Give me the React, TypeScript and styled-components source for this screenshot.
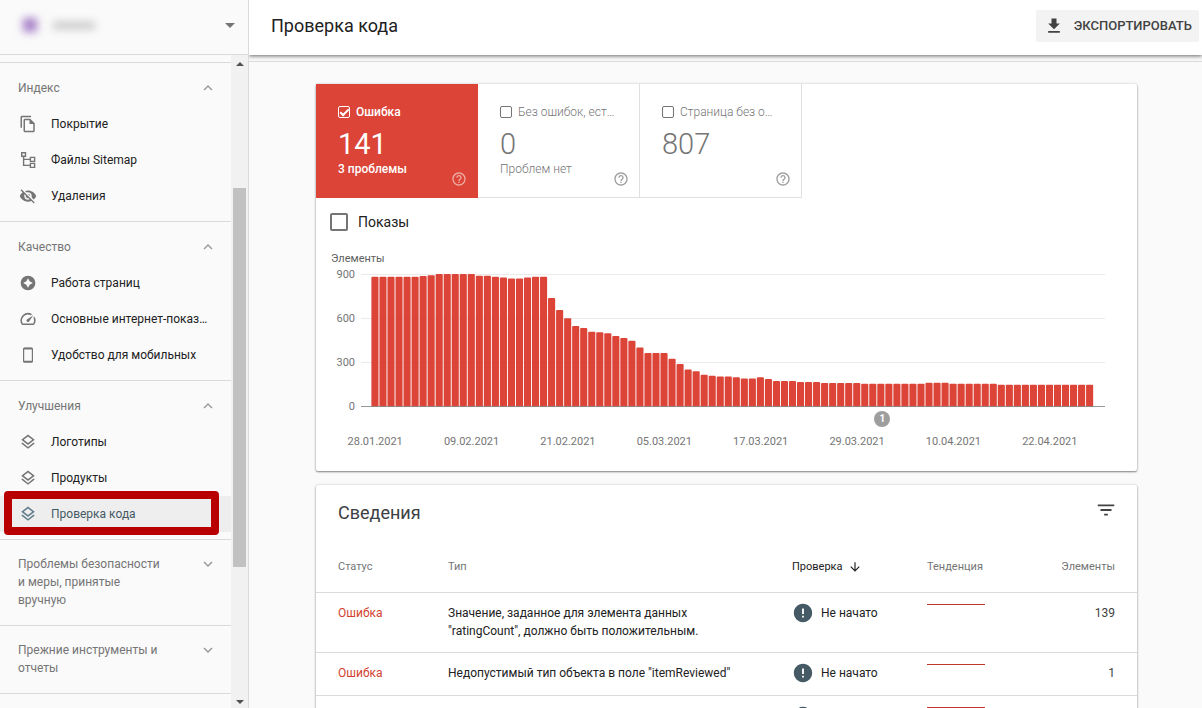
import React from "react";
import styled, { createGlobalStyle, css } from "styled-components";
import {
  MdArrowDownward,
  MdError,
  MdExpandLess,
  MdExpandMore,
  MdFileDownload,
  MdFilterList,
  MdHelpOutline,
  MdOutlineFileCopy,
  MdOutlineLayers,
  MdOutlineSpeed,
  MdVisibilityOff,
} from "react-icons/md";

const GlobalStyle = createGlobalStyle`
  *, *::before, *::after { box-sizing: border-box; }
  body {
    margin: 0;
    background: #fafafa;
    color: #212121;
    font: 400 12px/18px Roboto, "Noto Sans", sans-serif;
    overflow: hidden;
  }
  button, input { font: inherit; color: inherit; }
  svg { display: block; flex: none; }
`;

const Page = styled.div`
  display: flex;
  height: 100vh;
`;

/* Sidebar */

const Sidebar = styled.aside`
  display: flex;
  flex-direction: column;
  flex: none;
  width: 249px;
  border-right: 1px solid #dadada;
`;

const PropertyPicker = styled.button`
  display: flex;
  align-items: center;
  flex: none;
  gap: 20px;
  height: 55px;
  padding: 0 13px 4px 23px;
  border: 0;
  border-bottom: 1px solid #dadada;
  background: none;
`;

const BlurredLogo = styled.span`
  width: 14px;
  height: 14px;
  background: #a67fc8;
  filter: blur(4px);
`;

const BlurredName = styled.span`
  width: 42px;
  height: 7px;
  margin-left: -4px;
  background: #c4c4c4;
  filter: blur(4px);
`;

const PickerArrow = styled.span`
  margin-left: auto;
  border: 5px solid transparent;
  border-top-color: #757575;
  border-bottom: 0;
`;

const SidebarBody = styled.div`
  display: flex;
  flex: 1;
  min-height: 0;
`;

const Nav = styled.nav`
  flex: 1;
  min-width: 0;
  padding-top: 7px;
  overflow: hidden;
`;

const Group = styled.section`
  padding: 7px 0;
  border-top: 1px solid #dadada;
`;

const GroupToggle = styled.button<{ $collapsed?: boolean }>`
  display: flex;
  justify-content: space-between;
  align-items: center;
  width: 100%;
  height: 36px;
  padding: 0 14px 0 18px;
  border: 0;
  background: none;
  color: #757575;
  text-align: left;
  svg { color: #9a9a9a; }
  ${(p) =>
    p.$collapsed &&
    css`
      align-items: flex-start;
      height: auto;
      padding-top: 15px;
      padding-bottom: 16px;
      border-top: 1px solid #dadada;
    `}
`;

const GroupTitle = styled.span`
  max-width: 148px;
`;

const NavItem = styled.a<{ $active?: boolean }>`
  position: relative;
  display: flex;
  align-items: center;
  gap: 14px;
  height: 36px;
  padding: 0 19px;
  color: ${(p) => (p.$active ? "#455a64" : "#212121")};
  background: ${(p) => (p.$active ? "#eeeeee" : "none")};
  text-decoration: none;
  white-space: nowrap;
  svg { color: ${(p) => (p.$active ? "#607d8b" : "#757575")}; }
`;

const Highlight = styled.span`
  position: absolute;
  inset: -5px 12px -3px 4px;
  border: 8px solid #b80000;
  border-radius: 4px;
`;

const Scrollbar = styled.div`
  display: flex;
  flex-direction: column;
  align-items: center;
  justify-content: space-between;
  width: 17px;
  padding: 7px 0 4px;
  background: #f1f1f1;
`;

const ScrollArrow = styled.span<{ $down?: boolean }>`
  border: 4px solid transparent;
  ${(p) =>
    p.$down
      ? "border-top-color: #505050; border-bottom: 0;"
      : "border-bottom-color: #505050; border-top: 0;"}
`;

const ScrollTrack = styled.div`
  flex: 1;
  width: 13px;
  padding: 122px 0 0;
`;

const ScrollThumb = styled.div`
  height: 74%;
  background: #c1c1c1;
`;

/* Main column */

const Main = styled.main`
  display: flex;
  flex-direction: column;
  flex: 1;
  min-width: 0;
`;

const TopBar = styled.header`
  position: relative;
  display: flex;
  align-items: center;
  justify-content: space-between;
  flex: none;
  height: 55px;
  padding: 0 3px 4px 22px;
  background: #fff;
  box-shadow: 0 1px 4px rgba(0, 0, 0, 0.6);
  clip-path: inset(0 0 -8px 0);
`;

const PageTitle = styled.h1`
  margin: 0;
  font-size: 18px;
  line-height: 24px;
  font-weight: 400;
`;

const ExportButton = styled.button`
  display: flex;
  align-items: center;
  gap: 10px;
  height: 32px;
  padding: 0 7px 0 8px;
  border: 0;
  border-radius: 2px;
  background: #f3f3f3;
  color: #424242;
  font-size: 13px;
  font-weight: 500;
`;

const SubBar = styled.div`
  flex: none;
  height: 7px;
  border-bottom: 1px solid #dadada;
`;

const Content = styled.div`
  display: flex;
  flex-direction: column;
  gap: 14px;
  flex: 1;
  min-height: 0;
  padding: 22px 65px 0 67px;
  overflow: hidden;
`;

const Card = styled.section`
  flex: none;
  border-radius: 2px;
  background: #fff;
  box-shadow: 0 1px 2px rgba(0, 0, 0, 0.45), 0 0 3px rgba(0, 0, 0, 0.15);
`;

const Tiles = styled.div`
  display: flex;
`;

const Tile = styled.div<{ $active?: boolean }>`
  position: relative;
  width: 162px;
  height: 114px;
  padding: 19px 22px 0;
  border: solid #e0e0e0;
  border-width: 0 1px 1px 0;
  color: #757575;
  font-weight: 300;
  ${(p) =>
    p.$active &&
    css`
      border-color: #db4437;
      background: #db4437;
      color: #fff;
      font-weight: 500;
    `}
`;

const TileLabel = styled.label`
  display: flex;
  align-items: center;
  gap: 6px;
  white-space: nowrap;
`;

const Check = styled.input<{ $large?: boolean }>`
  appearance: none;
  display: grid;
  place-items: center;
  flex: none;
  width: ${(p) => (p.$large ? 18 : 12)}px;
  height: ${(p) => (p.$large ? 18 : 12)}px;
  margin: 0;
  border: ${(p) => (p.$large ? 2 : 1)}px solid ${(p) => (p.$large ? "#757575" : "currentColor")};
  border-radius: 2px;
  &:checked::before {
    content: "";
    width: 9px;
    height: 5px;
    margin-top: -2px;
    border: solid currentColor;
    border-width: 0 0 2px 2px;
    transform: rotate(-45deg);
  }
`;

const TileNumber = styled.div<{ $active?: boolean }>`
  font-size: 29px;
  line-height: 32px;
  margin-top: 7px;
  font-weight: ${(p) => (p.$active ? 400 : 300)};
`;

const TileHelp = styled.button<{ $active?: boolean }>`
  position: absolute;
  right: 10px;
  bottom: 10px;
  padding: 0;
  border: 0;
  background: none;
  color: ${(p) => (p.$active ? "rgba(255, 255, 255, 0.55)" : "#9e9e9e")};
`;

const ViewsToggle = styled.label`
  display: flex;
  align-items: center;
  gap: 10px;
  padding: 15px 14px 0;
  font-size: 14px;
`;

const AxisTitle = styled.div`
  margin-top: 20px;
  padding-left: 15px;
  color: #616161;
  font-size: 11px;
  line-height: 16px;
`;

const ChartRow = styled.div`
  display: flex;
  gap: 6px;
  height: 148px;
  padding-right: 32px;
`;

const YAxis = styled.div`
  display: flex;
  flex-direction: column;
  justify-content: space-between;
  width: 39px;
  color: #757575;
  font-size: 11px;
  line-height: 16px;
  text-align: right;
`;

const Plot = styled.div`
  position: relative;
  flex: 1;
  padding-top: 7px;
`;

const Marker = styled.span`
  position: absolute;
  left: 69%;
  bottom: -12px;
  width: 16px;
  height: 16px;
  border-radius: 50%;
  background: #9e9e9e;
  color: #fff;
  font-size: 10px;
  font-weight: 700;
  line-height: 16px;
  text-align: center;
`;

const XAxis = styled.div`
  display: grid;
  grid-template-columns: repeat(8, 1fr);
  padding: 19px 39px 21px 11px;
  color: #757575;
  font-size: 11px;
  line-height: 16px;
  text-align: center;
`;

const DetailsHeader = styled.div`
  display: flex;
  align-items: center;
  justify-content: space-between;
  height: 55px;
  padding: 0 20px 0 22px;
`;

const DetailsTitle = styled.h2`
  margin: 0;
  color: #3c4043;
  font-size: 18px;
  line-height: 24px;
  font-weight: 400;
`;

const IconButton = styled.button`
  padding: 0;
  border: 0;
  background: none;
  margin-bottom: 6px;
  color: #424242;
`;

const Table = styled.table`
  width: 100%;
  table-layout: fixed;
  border-spacing: 0;
`;

const Th = styled.th<{ $width?: number; $right?: boolean; $sorted?: boolean }>`
  width: ${(p) => (p.$width ? `${p.$width}px` : "auto")};
  height: 53px;
  padding: 2px 0 0;
  border-bottom: 1px solid #dadada;
  color: ${(p) => (p.$sorted ? "#212121" : "#757575")};
  font-size: 11px;
  font-weight: 400;
  text-align: ${(p) => (p.$right ? "right" : "left")};
  &:first-child { padding-left: 22px; }
  &:last-child { padding-right: 22px; }
`;

const Td = styled.td<{ $tone?: "error" | "muted" }>`
  height: 43px;
  padding: 11px 0 12px;
  border-bottom: 1px solid #dadada;
  color: ${(p) => (p.$tone === "error" ? "#d23f31" : p.$tone === "muted" ? "#424242" : "#212121")};
  vertical-align: top;
  &:first-child { padding-left: 22px; }
  &:nth-child(2) { padding-right: 44px; }
  &:last-child { padding-right: 22px; text-align: right; }
`;

const Inline = styled.span<{ $gap: number }>`
  display: flex;
  align-items: center;
  gap: ${(p) => p.$gap}px;
  height: 18px;
`;

const SitemapIcon = () => (
  <svg width="18" height="18" viewBox="0 0 18 18" fill="none" stroke="currentColor" strokeWidth="1.4">
    <path d="M2.7 1.7h3.8v3.6H2.7zM11.4 6.4h4.2v4h-4.2zM11.4 12.4h4.2v4h-4.2zM4.6 5.3v9.1h6.8M4.6 8.4h6.8" />
  </svg>
);

const ExperienceIcon = () => (
  <svg width="18" height="18" viewBox="0 0 24 24" fill="currentColor">
    <path
      fillRule="evenodd"
      d="M12 2.2a9.8 9.8 0 1 0 0 19.6 9.8 9.8 0 0 0 0-19.6zM12 5.6l2.2 4.2 4.2 2.2-4.2 2.2-2.2 4.2-2.2-4.2L5.6 12l4.2-2.2z"
    />
  </svg>
);

const PhoneIcon = () => (
  <svg width="18" height="18" viewBox="0 0 18 18" fill="none" stroke="currentColor">
    <rect x="4.6" y="2.2" width="8.8" height="13.8" rx="1" strokeWidth="1.2" />
    <path d="M4.6 2.6h8.8M4.6 15.6h8.8" strokeWidth="1.6" />
  </svg>
);

const layers = <MdOutlineLayers size={18} />;

const groups = [
  {
    title: "Индекс",
    items: [
      { label: "Покрытие", icon: <MdOutlineFileCopy size={18} /> },
      { label: "Файлы Sitemap", icon: <SitemapIcon /> },
      { label: "Удаления", icon: <MdVisibilityOff size={18} /> },
    ],
  },
  {
    title: "Качество",
    items: [
      { label: "Работа страниц", icon: <ExperienceIcon /> },
      { label: "Основные интернет-показ…", icon: <MdOutlineSpeed size={18} /> },
      { label: "Удобство для мобильных", icon: <PhoneIcon /> },
    ],
  },
  {
    title: "Улучшения",
    items: [
      { label: "Логотипы", icon: layers },
      { label: "Продукты", icon: layers },
      { label: "Проверка кода", icon: layers, active: true },
    ],
  },
];

const collapsedGroups = ["Проблемы безопасности и меры, принятые вручную", "Прежние инструменты и отчеты"];

const tiles = [
  { label: "Ошибка", value: "141", note: "3 проблемы", active: true },
  { label: "Без ошибок, ест…", value: "0", note: "Проблем нет" },
  { label: "Страница без о…", value: "807", note: "" },
];

/* Number of consecutive days followed by the item count on those days */
const runs: [number, number][] = [
  [6, 882], [1, 887], [1, 892], [5, 900], [2, 889], [1, 882], [1, 877], [2, 870], [1, 877], [2, 882],
  [1, 737], [1, 656], [1, 599], [1, 547], [1, 533], [1, 508], [1, 504], [1, 497], [1, 479], [1, 465],
  [1, 447], [1, 400], [3, 363], [1, 325], [1, 289], [1, 252], [1, 239], [1, 216], [1, 209], [2, 203],
  [1, 198], [2, 191], [1, 198], [1, 187], [3, 173], [3, 166], [5, 160], [8, 155], [3, 161], [6, 155],
  [12, 148],
];
const daily = runs.flatMap(([days, value]) => Array<number>(days).fill(value));

const dates = [
  "28.01.2021", "09.02.2021", "21.02.2021", "05.03.2021",
  "17.03.2021", "29.03.2021", "10.04.2021", "22.04.2021",
];

const issues = [
  {
    status: "Ошибка",
    type: 'Значение, заданное для элемента данных "ratingCount", должно быть положительным.',
    check: "Не начато",
    count: "139",
  },
  {
    status: "Ошибка",
    type: 'Недопустимый тип объекта в поле "itemReviewed"',
    check: "Не начато",
    count: "1",
  },
  { status: "", type: "", check: "", count: "" },
];

const BarChart = () => (
  <svg width="100%" height="133" viewBox="0 0 744 133" preserveAspectRatio="none" aria-hidden="true">
    {[0, 44, 88].map((y) => (
      <rect key={y} x="0" y={y} width="744" height="1" fill="#ebebeb" />
    ))}
    {daily.map((value, i) => {
      const x = 10.4 + i * 8.03;
      const top = 132.5 - value * 0.1472;
      return (
        <path
          key={i}
          fill="#db4437"
          d={`M${x} 132.5V${top + 1}q0-1 1-1h5.1q1 0 1 1V132.5z`}
        />
      );
    })}
    <rect x="0" y="132" width="744" height="1" fill="#757575" fillOpacity="0.75" />
  </svg>
);

const App = () => (
  <>
    <GlobalStyle />
    <Page>
      <Sidebar>
        <PropertyPicker aria-label="Выбор ресурса">
          <BlurredLogo />
          <BlurredName />
          <PickerArrow />
        </PropertyPicker>
        <SidebarBody>
          <Nav>
            {groups.map((group) => (
              <Group key={group.title}>
                <GroupToggle>
                  <GroupTitle>{group.title}</GroupTitle>
                  <MdExpandLess size={18} />
                </GroupToggle>
                {group.items.map((item) => (
                  <NavItem key={item.label} href="#" $active={"active" in item}>
                    {item.icon}
                    {item.label}
                    {"active" in item && <Highlight />}
                  </NavItem>
                ))}
              </Group>
            ))}
            {collapsedGroups.map((title) => (
              <GroupToggle key={title} $collapsed>
                <GroupTitle>{title}</GroupTitle>
                <MdExpandMore size={18} />
              </GroupToggle>
            ))}
            <Group />
          </Nav>
          <Scrollbar>
            <ScrollArrow />
            <ScrollTrack>
              <ScrollThumb />
            </ScrollTrack>
            <ScrollArrow $down />
          </Scrollbar>
        </SidebarBody>
      </Sidebar>
      <Main>
        <TopBar>
          <PageTitle>Проверка кода</PageTitle>
          <ExportButton>
            <MdFileDownload size={20} />
            ЭКСПОРТИРОВАТЬ
          </ExportButton>
        </TopBar>
        <SubBar />
        <Content>
          <Card>
            <Tiles>
              {tiles.map((tile) => (
                <Tile key={tile.label} $active={tile.active}>
                  <TileLabel>
                    <Check type="checkbox" defaultChecked={tile.active} />
                    {tile.label}
                  </TileLabel>
                  <TileNumber $active={tile.active}>{tile.value}</TileNumber>
                  {tile.note}
                  <TileHelp $active={tile.active} aria-label="Справка">
                    <MdHelpOutline size={16} />
                  </TileHelp>
                </Tile>
              ))}
            </Tiles>
            <ViewsToggle>
              <Check type="checkbox" $large />
              Показы
            </ViewsToggle>
            <AxisTitle>Элементы</AxisTitle>
            <ChartRow>
              <YAxis>
                <span>900</span>
                <span>600</span>
                <span>300</span>
                <span>0</span>
              </YAxis>
              <Plot>
                <BarChart />
                <Marker>1</Marker>
              </Plot>
            </ChartRow>
            <XAxis>
              {dates.map((date) => (
                <span key={date}>{date}</span>
              ))}
            </XAxis>
          </Card>
          <Card>
            <DetailsHeader>
              <DetailsTitle>Сведения</DetailsTitle>
              <IconButton aria-label="Фильтр">
                <MdFilterList size={22} />
              </IconButton>
            </DetailsHeader>
            <Table>
              <thead>
                <tr>
                  <Th $width={132}>Статус</Th>
                  <Th>Тип</Th>
                  <Th $width={135} $sorted>
                    <Inline $gap={5}>
                      Проверка <MdArrowDownward size={14} />
                    </Inline>
                  </Th>
                  <Th $width={90}>Тенденция</Th>
                  <Th $width={120} $right>Элементы</Th>
                </tr>
              </thead>
              <tbody>
                {issues.map((issue) => (
                  <tr key={issue.type}>
                    <Td $tone="error">{issue.status}</Td>
                    <Td>{issue.type}</Td>
                    <Td>
                      <Inline $gap={7}>
                        <MdError size={22} color="#455a64" />
                        {issue.check}
                      </Inline>
                    </Td>
                    <Td>
                      <svg width="58" height="18" viewBox="0 0 58 18">
                        <rect width="58" height="1" fill="#c5372c" />
                      </svg>
                    </Td>
                    <Td $tone="muted">{issue.count}</Td>
                  </tr>
                ))}
              </tbody>
            </Table>
          </Card>
        </Content>
      </Main>
    </Page>
  </>
);

export default App;
